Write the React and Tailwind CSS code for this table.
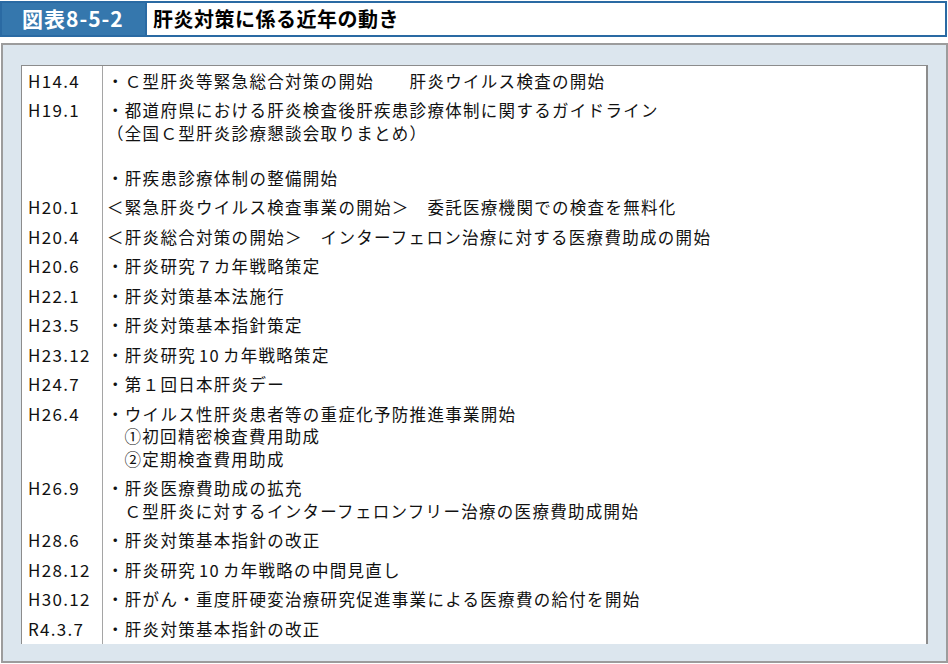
import React from 'react';

const Ten = () => <span className="px-[3px]">10</span>;

const rows = [
  { date: 'H14.4', lines: [['・Ｃ型肝炎等緊急総合対策の開始　　肝炎ウイルス検査の開始', 0]] },
  {
    date: 'H19.1',
    lines: [
      ['・都道府県における肝炎検査後肝疾患診療体制に関するガイドライン', 0],
      ['（全国Ｃ型肝炎診療懇談会取りまとめ）', 0],
      ['', 0],
      ['・肝疾患診療体制の整備開始', 0],
    ],
  },
  { date: 'H20.1', lines: [['＜緊急肝炎ウイルス検査事業の開始＞　委託医療機関での検査を無料化', 0]] },
  { date: 'H20.4', lines: [['＜肝炎総合対策の開始＞　インターフェロン治療に対する医療費助成の開始', 0]] },
  { date: 'H20.6', lines: [['・肝炎研究７カ年戦略策定', 0]] },
  { date: 'H22.1', lines: [['・肝炎対策基本法施行', 0]] },
  { date: 'H23.5', lines: [['・肝炎対策基本指針策定', 0]] },
  { date: 'H23.12', lines: [[<>・肝炎研究<Ten />カ年戦略策定</>, 0]] },
  { date: 'H24.7', lines: [['・第１回日本肝炎デー', 0]] },
  {
    date: 'H26.4',
    lines: [
      ['・ウイルス性肝炎患者等の重症化予防推進事業開始', 0],
      ['①初回精密検査費用助成', 1],
      ['②定期検査費用助成', 1],
    ],
  },
  {
    date: 'H26.9',
    lines: [
      ['・肝炎医療費助成の拡充', 0],
      ['Ｃ型肝炎に対するインターフェロンフリー治療の医療費助成開始', 1],
    ],
  },
  { date: 'H28.6', lines: [['・肝炎対策基本指針の改正', 0]] },
  { date: 'H28.12', lines: [[<>・肝炎研究<Ten />カ年戦略の中間見直し</>, 0]] },
  { date: 'H30.12', lines: [['・肝がん・重度肝硬変治療研究促進事業による医療費の給付を開始', 0]] },
  { date: 'R4.3.7', lines: [['・肝炎対策基本指針の改正', 0]] },
];

export default function App() {
  return (
    <div className="w-[948px] h-[664px] bg-white pt-px font-['Noto_Sans_CJK_JP',sans-serif] text-[#111]">
      {/* title bar */}
      <div className="flex h-[36px] w-[947px] border-2 border-[#2a6aa3]">
        <div className="w-[143px] bg-[#3577ad] flex items-center pl-[20px] text-white font-bold text-[21px] tracking-[1px]">
          図表8-5-2
        </div>
        <div className="flex-1 bg-white border-l-2 border-[#2a6aa3] flex items-center pl-[6px] font-bold text-[20px] tracking-[0.5px] text-black">
          肝炎対策に係る近年の動き
        </div>
      </div>

      {/* panel */}
      <div className="mt-[6px] ml-px w-[947px] h-[620px] border-2 border-[#9c9c9c] bg-[#dce6ee] pt-[20px] pl-[18px] pr-[18px]">
        <div className="bg-white border-l border-t border-r-2 border-[#8c8c8c] leading-[22.5px]">
          {rows.map((r) => (
            <div key={r.date} className="flex">
              <div className="w-[81px] shrink-0 border-r border-[#a5a5a5] pl-[6px] py-[3.5px] text-[17px] tracking-[1.3px]">
                {r.date}
              </div>
              <div className="flex-1 pl-[4px] py-[3.5px] text-[16.5px] tracking-[1.3px]">
                {r.lines.map(([t, indent], i) => (
                  <div key={i} className={indent ? 'pl-[17.5px] h-[22.5px] whitespace-nowrap' : 'h-[22.5px] whitespace-nowrap'}>
                    {t}
                  </div>
                ))}
              </div>
            </div>
          ))}
        </div>
      </div>
    </div>
  );
}
